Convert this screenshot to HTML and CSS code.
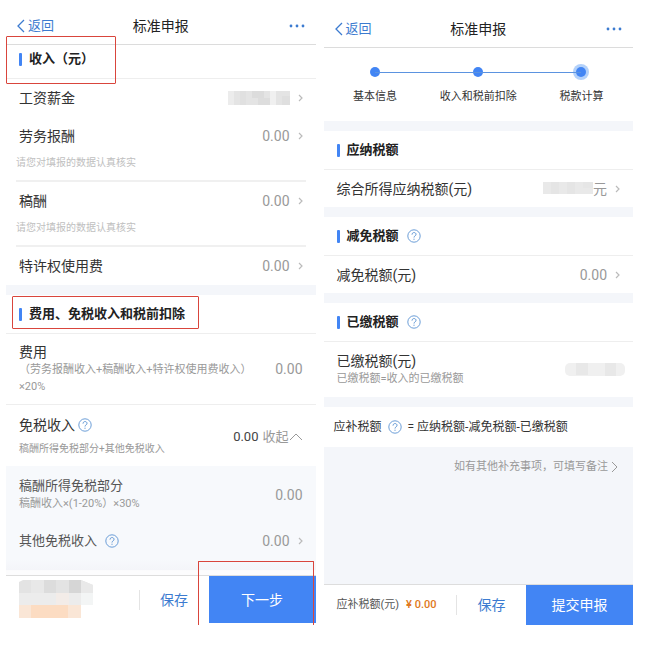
FILE: index.html
```html
<!DOCTYPE html>
<html lang="zh-CN">
<head>
    <meta charset="UTF-8">
    <meta name="viewport" content="width=device-width, initial-scale=1.0">
    <title>标准申报</title>
    <link rel="stylesheet" href="styles.css">
</head>
<body>
    <svg width="0" height="0" class="defs">
        <symbol id="back" viewBox="0 0 8 14"><path d="M7 1L1 7l6 6" fill="none" stroke="currentColor" stroke-width="1.3"/></symbol>
        <symbol id="arrow" viewBox="0 0 5 8"><path d="M1 1l3 3-3 3" fill="none" stroke="currentColor" stroke-width="1.2"/></symbol>
        <symbol id="long-arrow" viewBox="0 0 7 12"><path d="M1 1l5 5-5 5" fill="none" stroke="currentColor" stroke-width="1"/></symbol>
        <symbol id="up" viewBox="0 0 14 8"><path d="M1 7l6-6 6 6" fill="none" stroke="currentColor" stroke-width="1"/></symbol>
        <symbol id="help" viewBox="0 0 14 14"><circle cx="7" cy="7" r="6.2" fill="none" stroke="currentColor" stroke-width="0.9"/><path d="M5 5.6c0-2.7 4-2.7 4-.2 0 1.5-2 1.5-2 3.1M7 9.7v1.100" fill="none" stroke="currentColor" stroke-width="1"/></symbol>
        <symbol id="dots" viewBox="0 0 16 4"><circle cx="2" cy="2" r="1.4" fill="currentColor"/><circle cx="8" cy="2" r="1.4" fill="currentColor"/><circle cx="14" cy="2" r="1.4" fill="currentColor"/></symbol>
    </svg>

    <main class="screens">
        <div class="screen income">
            <header>
                <a class="back" href="#"><svg><use href="#back"/></svg>返回</a>
                <h1>标准申报</h1>
                <button class="more" aria-label="更多"><svg><use href="#dots"/></svg></button>
            </header>
            <h2 class="first marked">收入（元）</h2>
            <div class="row">
                <span class="label">工资薪金</span>
                <a class="value" href="#" aria-label="工资薪金金额">
                    <svg class="mosaic-pay" viewBox="0 0 62 14">
                        <rect width="62" height="14" fill="#e4e4e4"/>
                        <rect width="6" height="14" fill="#ececec"/>
                        <rect x="12" width="6" height="14" fill="#e0e0e0"/>
                        <rect x="24" width="12" height="7" fill="#dcdcdc"/>
                        <rect x="30" y="7" width="12" height="7" fill="#dddddd"/>
                        <rect x="42" width="6" height="14" fill="#f0f0f0"/>
                        <rect x="54" y="5" width="8" height="9" fill="#dfdfdf"/>
                    </svg>
                    <svg class="arrow"><use href="#arrow"/></svg>
                </a>
            </div>
            <div class="row">
                <span class="label">劳务报酬</span>
                <a class="value" href="#">0.00<svg class="arrow"><use href="#arrow"/></svg></a>
            </div>
            <p class="tip">请您对填报的数据认真核实</p>
            <div class="row">
                <span class="label">稿酬</span>
                <a class="value" href="#">0.00<svg class="arrow"><use href="#arrow"/></svg></a>
            </div>
            <p class="tip">请您对填报的数据认真核实</p>
            <div class="row">
                <span class="label">特许权使用费</span>
                <a class="value" href="#">0.00<svg class="arrow"><use href="#arrow"/></svg></a>
            </div>
            <div class="gap"></div>
            <h2 class="marked-wide">费用、免税收入和税前扣除</h2>
            <div class="row tall line">
                <div class="text">
                    <span class="label">费用</span>
                    <p class="note">（劳务报酬收入+稿酬收入+特许权使用费收入）<br>×20%</p>
                </div>
                <span class="value">0.00</span>
            </div>
            <div class="row tall exempt">
                <div class="text">
                    <span class="label">免税收入<button class="help" aria-label="帮助"><svg><use href="#help"/></svg></button></span>
                    <p class="note small">稿酬所得免税部分+其他免税收入</p>
                </div>
                <button class="fold"><b>0.00</b>收起<svg><use href="#up"/></svg></button>
            </div>
            <div class="detail">
                <div class="row tall">
                    <div class="text">
                        <span class="label">稿酬所得免税部分</span>
                        <p class="note">稿酬收入×(1-20%）×30%</p>
                    </div>
                    <span class="value">0.00</span>
                </div>
                <div class="row">
                    <span class="label">其他免税收入<button class="help wide" aria-label="帮助"><svg><use href="#help"/></svg></button></span>
                    <a class="value" href="#">0.00<svg class="arrow"><use href="#arrow"/></svg></a>
                </div>
            </div>
            <footer>
                <div class="total">
                    <svg class="mosaic-total" viewBox="0 0 76 40">
                        <path d="M0 2L4 0h58l12 5v20H0z" fill="#e3e3e3"/>
                        <rect x="12" width="13" height="13" fill="#e8e8e8"/>
                        <rect x="25" width="12" height="13" fill="#dcdcdc"/>
                        <rect x="50" width="12" height="13" fill="#d6d6d6"/>
                        <path d="M62 0l12 5v8H62z" fill="#e9e9e9"/>
                        <rect y="13" width="62" height="12" fill="#ececec"/>
                        <rect x="37" y="13" width="13" height="12" fill="#f3ece8"/>
                        <rect x="62" y="13" width="12" height="12" fill="#f3f5f5"/>
                        <rect y="25" width="62" height="13" fill="#fae6d6"/>
                        <rect x="12" y="25" width="37" height="13" fill="#fcdcc2"/>
                    </svg>
                </div>
                <button class="save">保存</button>
                <button class="submit marked-submit">下一步</button>
            </footer>
        </div>

        <div class="screen tax">
            <header>
                <a class="back" href="#"><svg><use href="#back"/></svg>返回</a>
                <h1>标准申报</h1>
                <button class="more" aria-label="更多"><svg><use href="#dots"/></svg></button>
            </header>
            <ol class="steps">
                <li>基本信息</li>
                <li>收入和税前扣除</li>
                <li class="current">税款计算</li>
            </ol>
            <div class="gap"></div>
            <h2>应纳税额</h2>
            <div class="row">
                <span class="label">综合所得应纳税额(元)</span>
                <a class="value" href="#">
                    <svg class="mosaic-tax" viewBox="0 0 50 13">
                        <rect width="50" height="12" fill="#e9e9e9"/>
                        <rect x="8" width="8" height="12" fill="#e5e5e5"/>
                        <rect x="24" width="8" height="12" fill="#e5e5e5"/>
                        <rect x="40" width="10" height="6" fill="#e6e6e6"/>
                    </svg>元<svg class="arrow"><use href="#arrow"/></svg>
                </a>
            </div>
            <div class="gap"></div>
            <h2>减免税额<button class="help" aria-label="帮助"><svg><use href="#help"/></svg></button></h2>
            <div class="row">
                <span class="label">减免税额(元)</span>
                <a class="value" href="#">0.00<svg class="arrow"><use href="#arrow"/></svg></a>
            </div>
            <div class="gap"></div>
            <h2>已缴税额<button class="help" aria-label="帮助"><svg><use href="#help"/></svg></button></h2>
            <div class="row tall paid">
                <div class="text">
                    <span class="label">已缴税额(元)</span>
                    <p class="note">已缴税额=收入的已缴税额</p>
                </div>
                <svg class="mosaic-paid" viewBox="0 0 60 14">
                    <rect width="60" height="13" rx="5" fill="#f0f0f0"/>
                    <rect x="11" width="12" height="12" fill="#e8e8e8"/>
                    <rect x="40" width="11" height="13" fill="#e8e8e8"/>
                </svg>
            </div>
            <div class="gap"></div>
            <p class="formula">应补税额<button class="help" aria-label="帮助"><svg><use href="#help"/></svg></button>= 应纳税额-减免税额-已缴税额</p>
            <div class="remark">
                <a href="#">如有其他补充事项，可填写备注<svg><use href="#long-arrow"/></svg></a>
            </div>
            <footer>
                <div class="total">应补税额(元)<b>¥ 0.00</b></div>
                <button class="save">保存</button>
                <button class="submit">提交申报</button>
            </footer>
        </div>
    </main>
</body>
</html>
```
FILE: styles.css
```css
* {
    box-sizing: border-box;
}
body {
    margin: 0;
    background-color: #fff;
    color: #333;
    font-family: Roboto, "Noto Sans CJK SC", sans-serif;
    font-size: 14px;
    line-height: 18px;
}
h1, h2, p, ol {
    margin: 0;
    padding: 0;
}
a {
    color: inherit;
    text-decoration: none;
}
button {
    border: 0;
    padding: 0;
    background: none;
    color: inherit;
    font: inherit;
}
svg {
    display: block;
    flex: none;
}
.defs {
    position: absolute;
}
.screens {
    display: grid;
    grid-template-columns: 1fr 1fr;
    align-items: start;
    gap: 8px;
    padding: 0 15px 0 6px;
}
header {
    display: grid;
    grid-template-columns: 1fr auto 1fr;
    align-items: center;
    height: 45px;
    padding: 7px 11px 0;
    border-bottom: 1px solid #dcdcdc;
}
.tax header {
    height: 48px;
    padding-top: 10px;
}
h1 {
    font-size: 14px;
    font-weight: 400;
    color: #222;
}
.back {
    display: flex;
    align-items: center;
    gap: 3px;
    color: #3c7bd0;
    font-size: 13px;
}
.back svg {
    width: 8px;
    height: 14px;
}
.more {
    justify-self: end;
    color: #3c7bd0;
}
.more svg {
    width: 16px;
    height: 4px;
}

h2 {
    display: flex;
    align-items: center;
    position: relative;
    height: 39px;
    padding: 0 13px;
    border-bottom: 1px solid #eee;
    color: #222;
    font-size: 13px;
    font-weight: 700;
}
h2::before {
    content: "";
    width: 3px;
    height: 13px;
    margin-right: 7px;
    border-radius: 1px;
    background-color: #4285f4;
}
h2.first {
    height: 34px;
    padding-bottom: 5px;
}
.row {
    display: flex;
    align-items: center;
    justify-content: space-between;
    height: 38px;
    padding: 0 13px;
}
.tax .row {
    height: 37px;
}
.row.tall, .tax .tall {
    height: auto;
    padding: 9px 13px;
}
.row.exempt {
    padding: 11px 13px 9px;
}
.tax .paid {
    padding: 10px 8px 10px 13px;
}
.line {
    border-bottom: 1px solid #eee;
}
.label {
    display: flex;
    align-items: center;
}
.value {
    display: flex;
    align-items: center;
    color: #999;
}
.arrow {
    width: 5px;
    height: 8px;
    margin-left: 8px;
    color: #bbb;
}
.tip {
    margin: -1px 10px 0;
    padding-bottom: 8px;
    border-bottom: 2px solid #f0f0f0;
    color: #c0c0c0;
    font-size: 10px;
}
.note {
    color: #999;
    font-size: 11px;
    line-height: 17px;
    white-space: nowrap;
}
.small {
    font-size: 10px;
}
.exempt .note {
    margin-top: 6px;
}
.gap {
    height: 10px;
    background-color: #f4f6fa;
}
.help {
    margin-left: 3px;
    color: #5b93d3;
}
.help svg {
    width: 14px;
    height: 14px;
}
.wide, h2 .help {
    margin-left: 8px;
}
.fold {
    display: flex;
    align-items: center;
    color: #999;
    font-size: 13px;
}
.fold b {
    margin-right: 4px;
    color: #444;
    font-weight: 400;
}
.fold svg {
    width: 14px;
    height: 8px;
}
.detail {
    padding: 2px 0 14px;
    background: linear-gradient(#f7f9fc 85%, #f4f5f9 95%, #fcfcfd 96%);
}
.detail .row:last-child {
    height: 40px;
}
.detail .label {
    color: #555;
    font-size: 13px;
}

.steps {
    display: grid;
    grid-template-columns: repeat(3, 1fr);
    height: 73px;
    padding-top: 17px;
    list-style: none;
    font-size: 11px;
    text-align: center;
}
.steps li {
    position: relative;
    white-space: nowrap;
}
.steps li::before {
    content: "";
    display: block;
    width: 10px;
    height: 10px;
    margin: 2px auto 11px;
    border-radius: 50%;
    background-color: #4285f4;
}
.steps li + li::after {
    content: "";
    position: absolute;
    top: 7px;
    right: 50%;
    width: 100%;
    height: 1px;
    background-color: #5b93e0;
}
.steps .current::before {
    box-shadow: 0 0 0 3px #b3d1fa;
}
.formula {
    display: flex;
    align-items: center;
    height: 40px;
    padding: 0 10px;
    font-size: 12px;
}
.formula .help {
    margin: 0 6px;
}
.remark {
    display: flex;
    justify-content: flex-end;
    height: 137px;
    padding: 11px 15px;
    background-color: #f4f6fa;
    color: #999;
    font-size: 11px;
}
.remark a {
    display: flex;
    align-items: center;
    gap: 3px;
    height: 18px;
}
.remark svg {
    width: 7px;
    height: 12px;
}

footer {
    display: flex;
    align-items: center;
    height: 48px;
    border-top: 1px solid #ddd;
}
.tax footer {
    height: 41px;
}
.total {
    flex: 1;
    padding-left: 13px;
    color: #555;
    font-size: 11px;
    white-space: nowrap;
}
.total b {
    margin-left: 7px;
    color: #e07820;
    font-weight: 500;
}
.save {
    width: 70px;
    height: 20px;
    border-left: 1px solid #e4e4e4;
    color: #3c7bd0;
}
.submit {
    position: relative;
    align-self: stretch;
    width: 107px;
    background-color: #4285f4;
    color: #fff;
}

.marked::after, .marked-wide::after, .marked-submit::after {
    content: "";
    position: absolute;
    border: 1px solid #d9453c;
    border-radius: 1px;
}
.marked::after {
    top: -9px;
    left: 0;
    width: 108px;
    height: 46px;
}
.marked-wide::after {
    top: 1px;
    left: 6px;
    width: 185px;
    height: 31px;
}
.marked-submit::after {
    top: -15px;
    right: 2px;
    bottom: -4px;
    left: -11px;
    border-bottom: 0;
}

.mosaic-pay {
    width: 62px;
    height: 14px;
}
.mosaic-total {
    width: 76px;
    height: 40px;
}
.mosaic-tax {
    width: 50px;
    height: 13px;
}
.mosaic-paid {
    width: 60px;
    height: 14px;
}
```
